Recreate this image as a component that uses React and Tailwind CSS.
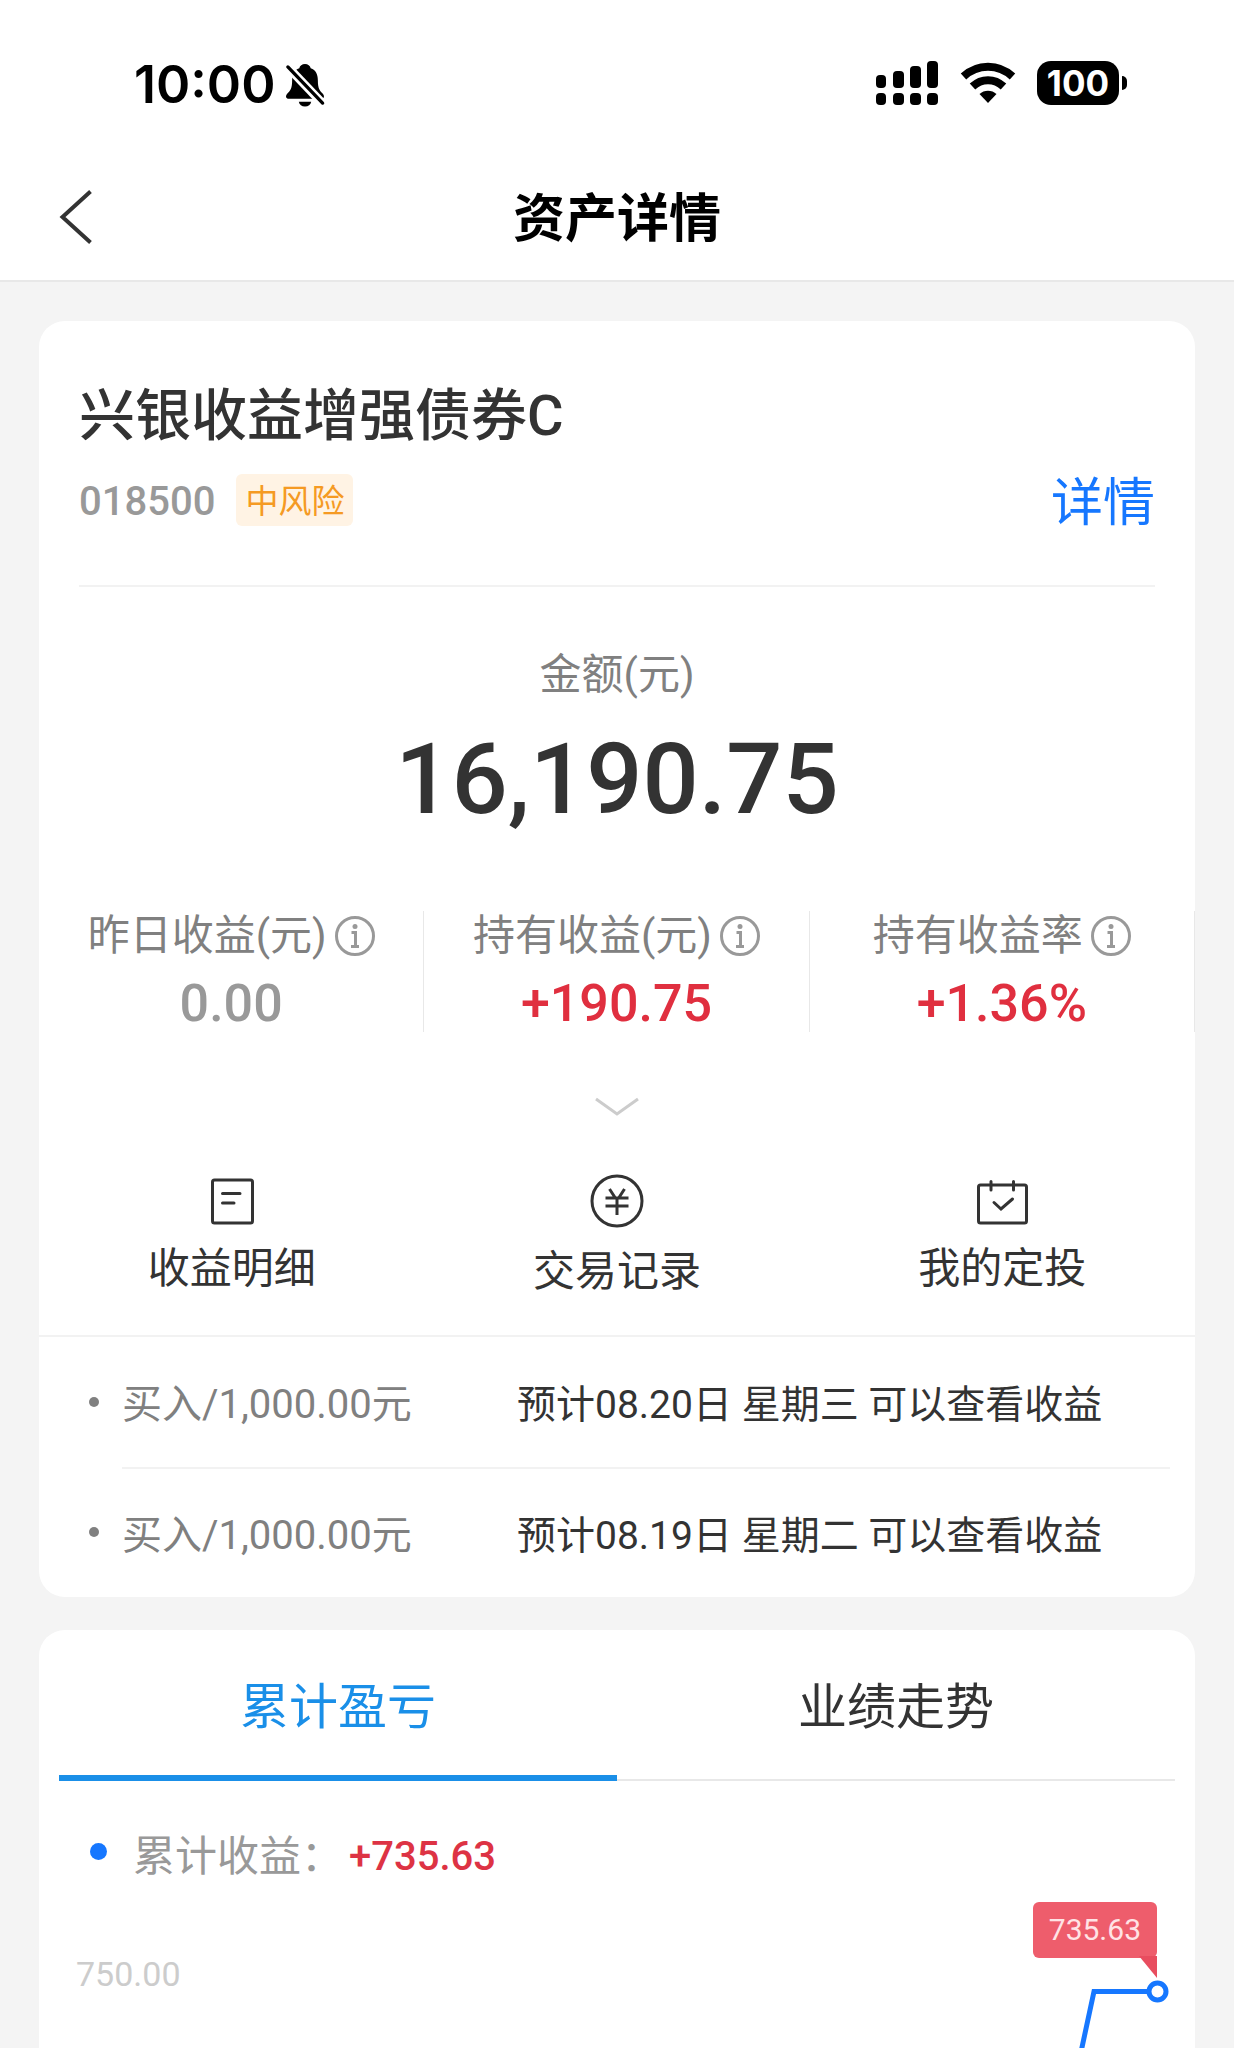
import { useState } from 'react';

const BellOffIcon = () => (
    <svg className="w-[40px] h-[46px]" viewBox="0 0 42 46" fill="none" aria-hidden="true">
        <path
            d="M21 1C18 1 15.500 3 15 5.500C9.500 7.500 7.500 12 7.500 18C7.500 27 5.500 29 2.500 32C0 35 1 37.500 4 37.500H38C41 37.500 42 35 39.500 32C36.500 29 34.500 27 34.500 18C34.500 12 32.500 7.500 27 5.500C26.500 3 24 1 21 1Z"
            fill="#000"
        />
        <path d="M14.500 40.500H27.500C27 43.500 24.500 45.500 21 45.500S15 43.500 14.500 40.500Z" fill="#000" />
        <path d="M2 3L40 43" stroke="#fff" strokeWidth="9" />
        <path d="M3 4L39.500 42" stroke="#000" strokeWidth="3.500" strokeLinecap="round" />
    </svg>
);

const SignalIcon = () => (
    <svg className="w-[64px] h-[44px]" viewBox="0 0 64 44" fill="#000" aria-hidden="true">
        <rect x="1" y="14" width="10" height="13" rx="4" />
        <rect x="18" y="10" width="11" height="17" rx="4" />
        <rect x="35" y="5" width="11" height="22" rx="4" />
        <rect x="52" y="0" width="11" height="27" rx="4" />
        <rect x="1" y="32" width="10" height="12" rx="4" />
        <rect x="18" y="32" width="11" height="12" rx="4" />
        <rect x="35" y="32" width="11" height="12" rx="4" />
        <rect x="52" y="32" width="11" height="12" rx="4" />
    </svg>
);

const WifiIcon = () => (
    <svg className="w-[56px] h-[42px]" viewBox="0 0 56 42" fill="none" stroke="#000" aria-hidden="true">
        <path d="M3.500 14.500C17.500 1.500 38.500 1.500 52.500 14.500" strokeWidth="8" />
        <path d="M12.500 24.500C21.500 16 34.500 16 43.500 24.500" strokeWidth="8" />
        <path d="M28 41L19.500 32C24 27.500 32 27.500 36.500 32Z" fill="#000" stroke="none" />
    </svg>
);

const InfoIcon = () => (
    <svg className="w-[40px] h-[40px]" viewBox="0 0 40 40" fill="none" stroke="#999" aria-hidden="true">
        <circle cx="20" cy="20" r="18.500" strokeWidth="3" />
        <circle cx="20" cy="10.500" r="2.500" fill="#999" stroke="none" />
        <path d="M16.500 16.500H20.500V30M16 30.500H24" strokeWidth="3" />
    </svg>
);

const DetailIcon = () => (
    <svg className="w-[52px] h-[51px]" viewBox="0 0 52 51" fill="none" stroke="#333" strokeWidth="3" strokeLinecap="round" aria-hidden="true">
        <rect x="6.500" y="6" width="40" height="43" rx="2" />
        <path d="M16.500 19.500H34M16.500 29H28" />
    </svg>
);

const YuanIcon = () => (
    <svg className="w-[54px] h-[54px]" viewBox="0 0 54 54" fill="none" stroke="#333" strokeWidth="3" aria-hidden="true">
        <circle cx="27" cy="27" r="25" />
        <path d="M19.500 15L25 23.500M34.500 15L29 23.500M15.500 24H38.500M15.500 32H38.500M27 24V41" />
    </svg>
);

const PlanIcon = () => (
    <svg className="w-[54px] h-[51px]" viewBox="0 0 54 51" fill="none" stroke="#333" strokeWidth="3" strokeLinecap="round" aria-hidden="true">
        <rect x="3.500" y="11" width="48" height="38" rx="2" />
        <path d="M16 7.500V16M38.500 7.500V16" />
        <path d="M19 28.500L26 35L37.500 25" />
    </svg>
);

const stats = [
    { label: '昨日收益(元)', value: '0.00', color: 'text-[#999]' },
    { label: '持有收益(元)', value: '+190.75', color: 'text-[#e02f3f]' },
    { label: '持有收益率', value: '+1.36%', color: 'text-[#e02f3f]' },
];

const actions = [
    { label: '收益明细', Icon: DetailIcon },
    { label: '交易记录', Icon: YuanIcon },
    { label: '我的定投', Icon: PlanIcon },
];

const orders = [
    { amount: '买入/1,000.00元', note: '预计08.20日 星期三 可以查看收益' },
    { amount: '买入/1,000.00元', note: '预计08.19日 星期二 可以查看收益' },
];

const tabs = ['累计盈亏', '业绩走势'];

const Header = () => (
    <header className="bg-white border-b-2 border-[#e8e8e8]">
        <div className="flex items-center justify-between h-[154px] pt-3 pl-[134px] pr-[107px] text-black">
            <div className="flex items-center gap-[10px] pt-[3px] font-['Inter',sans-serif]">
                <span className="text-[52px] leading-[56px] font-semibold">10:00</span>
                <BellOffIcon />
            </div>
            <div className="flex items-center gap-[21px]">
                <SignalIcon />
                <WifiIcon />
                <div className="flex items-center gap-[3px]">
                    <span className="flex items-center justify-center w-[82px] h-[44px] rounded-[14px] bg-black text-white font-['Inter',sans-serif] text-[35px] leading-[44px] font-bold">
                        100
                    </span>
                    <span className="w-[5px] h-[14px] rounded-r-full bg-black" />
                </div>
            </div>
        </div>
        <div className="grid grid-cols-[1fr_auto_1fr] items-center h-[126px] px-[58px]">
            <button type="button" aria-label="返回" className="w-[36px]">
                <svg className="w-[36px] h-[56px]" viewBox="0 0 36 56" fill="none" stroke="#333" strokeWidth="4">
                    <path d="M32.500 2.500L4.500 28L32.500 53.500" />
                </svg>
            </button>
            <h1 className="pt-[6px] text-[52px] leading-[60px] font-bold text-black">资产详情</h1>
        </div>
    </header>
);

const AssetCard = () => (
    <section className="bg-white rounded-[26px] pt-[63px]">
        <div className="px-[40px]">
            <h2 className="text-[56px] leading-[64px] font-medium">兴银收益增强债券C</h2>
            <div className="flex items-center justify-between h-[52px] mt-[26px]">
                <div className="flex items-center gap-[21px]">
                    <span className="pt-[4px] text-[40px] leading-[52px] font-medium text-[#999]">018500</span>
                    <span className="h-[52px] px-[9px] pt-[2px] rounded-md bg-[#fff3e4] text-[33px] leading-[52px] text-[#f59a23]">中风险</span>
                </div>
                <a href="#detail" className="pt-[8px] text-[52px] leading-[52px] text-[#1677ff]">详情</a>
            </div>
            <hr className="mt-[59px] border-t-2 border-[#f2f2f2]" />
        </div>

        <div className="mt-[60px] text-center">
            <p className="text-[42px] leading-[56px] text-[#808080]">金额(元)</p>
            <p className="mt-[26px] text-[99px] leading-[100px] font-medium">16,190.75</p>
        </div>

        <div className="grid grid-cols-3 mt-[82px]">
            {stats.map(({ label, value, color }) => (
                <div key={label} className="flex flex-col items-center gap-[18px] pt-[3px] border-r border-[#e8e8e8]">
                    <div className="flex items-center gap-2 text-[42px] leading-[44px] text-[#808080]">
                        {label}
                        <InfoIcon />
                    </div>
                    <p className={`text-[52px] leading-[56px] font-medium ${color}`}>{value}</p>
                </div>
            ))}
        </div>

        <button type="button" aria-label="展开" className="block mx-auto mt-[64px]">
            <svg className="w-[46px] h-[22px]" viewBox="0 0 46 22" fill="none" stroke="#ccc" strokeWidth="3">
                <path d="M2 3L23 18L44 3" />
            </svg>
        </button>

        <div className="grid grid-cols-3 items-start mt-[56px] pb-[33px]">
            {actions.map(({ label, Icon }) => (
                <button key={label} type="button" className="flex flex-col items-center gap-[14px] text-[42px] leading-[60px]">
                    <Icon />
                    {label}
                </button>
            ))}
        </div>

        <ul className="border-t-2 border-[#f2f2f2]">
            {orders.map(({ amount, note }, i) => (
                <li key={note} className="flex items-center pl-[50px] pr-[25px]">
                    <span className="w-[10px] h-[10px] mr-[23px] rounded-full bg-[#808080]" />
                    <div className={`flex flex-1 items-center h-[130px] pt-[6px] ${i > 0 ? 'border-t-2 border-[#f2f2f2]' : ''}`}>
                        <span className="w-[395px] text-[40px] leading-[56px] text-[#808080]">{amount}</span>
                        <span className="text-[39px] leading-[56px]">{note}</span>
                    </div>
                </li>
            ))}
        </ul>
    </section>
);

const ProfitChart = () => (
    <div className="relative flex-1 min-h-[150px] mt-[3px]">
        <span className="absolute left-[37px] top-[64px] text-[34px] leading-[40px] text-[#ccc]">750.00</span>
        <svg className="absolute right-[20px] top-[86px] w-[110px] h-[76px]" viewBox="0 0 110 76" fill="none" stroke="#1677ff" strokeWidth="5">
            <path d="M16 76L29 15.500H83" />
            <circle cx="92.500" cy="15.500" r="8.500" fill="#fff" />
        </svg>
        <div className="absolute right-[38px] top-[12px]">
            <span className="block px-4 rounded-md bg-[#ee5d6c] text-[30px] leading-[56px] text-[#ffe3e5]">735.63</span>
            <svg className="absolute right-0 top-[54px] w-[18px] h-[22px]" viewBox="0 0 18 22">
                <path d="M0 0H18V22Z" fill="#e84d5f" />
            </svg>
        </div>
    </div>
);

const TrendCard = () => {
    const [active, setActive] = useState(tabs[0]);

    return (
        <section className="flex flex-col flex-1 bg-white rounded-t-[26px]">
            <div className="grid grid-cols-2 mx-[20px]" role="tablist">
                {tabs.map((tab) => (
                    <button
                        key={tab}
                        type="button"
                        role="tab"
                        aria-selected={tab === active}
                        onClick={() => setActive(tab)}
                        className={`flex items-center justify-center h-[151px] text-[49px] leading-[60px] ${
                            tab === active
                                ? 'pt-[10px] border-b-6 border-[#1a8fe8] text-[#1a8fe8]'
                                : 'pt-[6px] border-b-2 border-[#e8e8e8]'
                        }`}
                    >
                        {tab}
                    </button>
                ))}
            </div>
            <div className="flex items-start mt-[46px] pl-[51px] leading-[60px]">
                <span className="w-[17px] h-[17px] mt-4 mr-[26px] rounded-full bg-[#1677ff]" />
                <span className="text-[42px] text-[#999]">累计收益：</span>
                <span className="ml-[6px] text-[40px] font-medium text-[#dd3344]">+735.63</span>
            </div>
            <ProfitChart />
        </section>
    );
};

const App = () => (
    <div className="flex flex-col min-h-screen bg-[#f4f4f4] text-[#333] font-['Roboto','Noto_Sans_CJK_SC',sans-serif]">
        <Header />
        <main className="flex flex-col flex-1 gap-[33px] pt-[39px] px-[39px]">
            <AssetCard />
            <TrendCard />
        </main>
    </div>
);

export default App;
